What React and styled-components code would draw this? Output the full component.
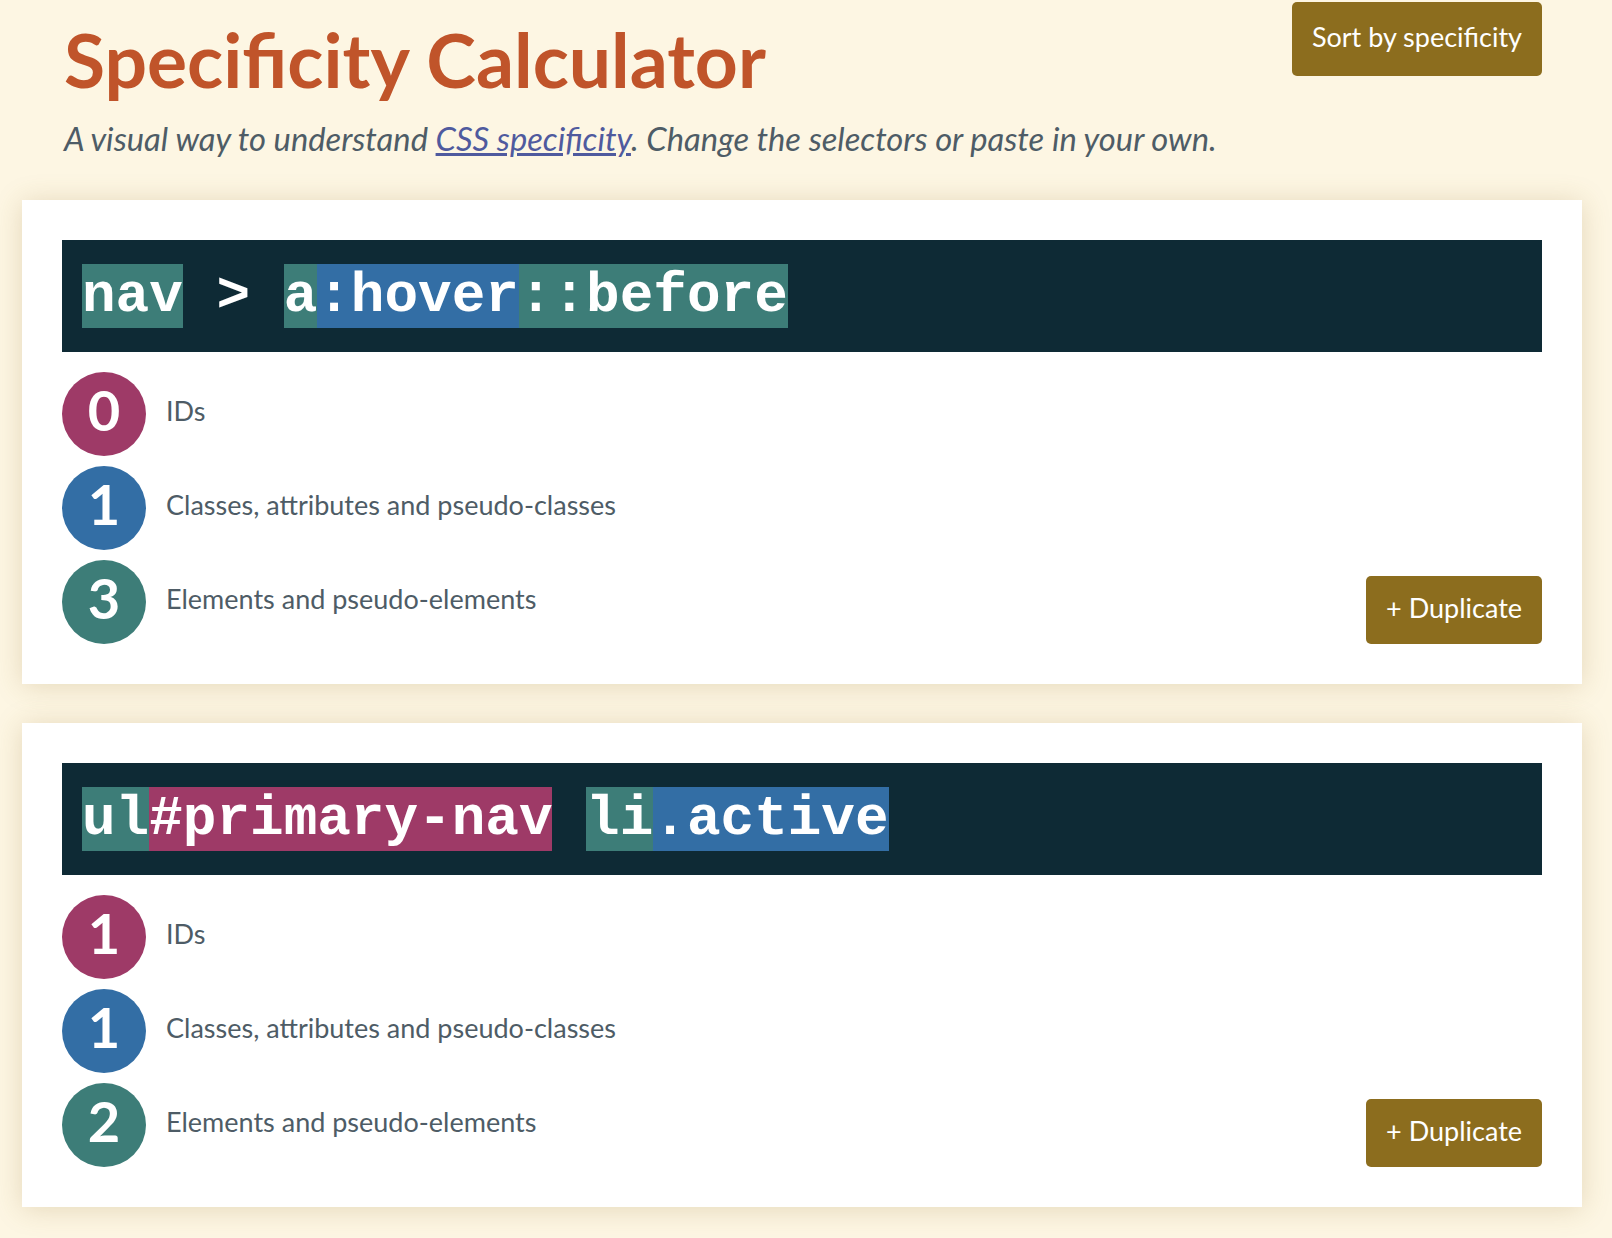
import React from "react";
import styled, { createGlobalStyle } from "styled-components";

const GlobalStyle = createGlobalStyle`
  body {
    margin: 0;
    background: #fdf6e3;
    font-family: Lato, "Noto Sans", sans-serif;
  }
`;

const COLORS = {
  id: "#9e3a67",
  cls: "#336ea5",
  el: "#3d7d78",
};

const selectors = [
  {
    parts: [
      { text: "nav", kind: "el" },
      { text: " > " },
      { text: "a", kind: "el" },
      { text: ":hover", kind: "cls" },
      { text: "::before", kind: "el" },
    ],
    counts: [0, 1, 3],
  },
  {
    parts: [
      { text: "ul", kind: "el" },
      { text: "#primary-nav", kind: "id" },
      { text: " " },
      { text: "li", kind: "el" },
      { text: ".active", kind: "cls" },
    ],
    counts: [1, 1, 2],
  },
];

const labels = [
  { kind: "id", text: "IDs" },
  { kind: "cls", text: "Classes, attributes and pseudo-classes" },
  { kind: "el", text: "Elements and pseudo-elements" },
];

export default function App() {
  return (
    <>
      <GlobalStyle />
      <Header>
        <div>
          <Title>Specificity Calculator</Title>
          <Subtitle>
            A visual way to understand <a href="#">CSS specificity</a>. Change
            the selectors or paste in your own.
          </Subtitle>
        </div>
        <Button type="button" $top>
          Sort by specificity
        </Button>
      </Header>
      <CardList>
        {selectors.map((sel, i) => (
          <Card key={i}>
            <SelectorBar>
              {sel.parts.map((p, j) => (
                <Part key={j} $kind={p.kind}>
                  {p.text}
                </Part>
              ))}
            </SelectorBar>
            <Bottom>
              <Counts>
                {labels.map((l, k) => (
                  <CountRow key={l.kind}>
                    <Circle $kind={l.kind}>{sel.counts[k]}</Circle>
                    <Label>{l.text}</Label>
                  </CountRow>
                ))}
              </Counts>
              <Button type="button">+ Duplicate</Button>
            </Bottom>
          </Card>
        ))}
      </CardList>
    </>
  );
}

const Header = styled.header`
  display: flex;
  justify-content: space-between;
  align-items: flex-start;
  padding: 0 70px 0 64px;
`;

const Title = styled.h1`
  margin: 0;
  padding-top: 16px;
  font-size: 75px;
  line-height: 86px;
  font-weight: 700;
  color: #c0542a;
`;

const Subtitle = styled.p`
  margin: 18px 0 0;
  font-size: 32.7px;
  line-height: 38px;
  font-style: italic;
  color: #4e5c66;

  a {
    color: #4f5a9e;
  }
`;

const Button = styled.button`
  margin-top: ${({ $top }) => ($top ? "2px" : "0")};
  height: ${({ $top }) => ($top ? "74px" : "68px")};
  padding: 0 20px 5px;
  border: none;
  border-radius: 5px;
  background: #8c6d1e;
  color: #fff;
  font-family: Lato, "Noto Sans", sans-serif;
  font-size: 27px;
  cursor: pointer;
`;

const CardList = styled.main`
  display: flex;
  flex-direction: column;
  gap: 39px;
  padding: 0 30px 31px 22px;
  margin-top: 42px;
`;

const Card = styled.section`
  background: #fff;
  padding: 40px;
  box-shadow: 0 2px 26px rgba(140, 110, 40, 0.22);
`;

const SelectorBar = styled.div`
  background: #0e2a35;
  padding: 24px 20px;
  font-family: "Liberation Mono", monospace;
  font-weight: 700;
  font-size: 56px;
  line-height: 64px;
  color: #fff;
  white-space: pre;
`;

const Part = styled.span`
  display: inline-block;
  vertical-align: top;
  height: 64px;
  background: ${({ $kind }) => ($kind ? COLORS[$kind] : "transparent")};
`;

const Bottom = styled.div`
  display: flex;
  justify-content: space-between;
  align-items: flex-end;
  margin-top: 20px;
`;

const Counts = styled.ul`
  list-style: none;
  margin: 0;
  padding: 0;
  display: flex;
  flex-direction: column;
  gap: 10px;
`;

const CountRow = styled.li`
  display: flex;
  align-items: center;
  gap: 20px;
`;

const Circle = styled.span`
  box-sizing: border-box;
  width: 84px;
  height: 84px;
  padding-bottom: 8px;
  border-radius: 50%;
  background: ${({ $kind }) => COLORS[$kind]};
  color: #fff;
  display: flex;
  align-items: center;
  justify-content: center;
  font-size: 56px;
  font-weight: 700;
  line-height: 1;
`;

const Label = styled.span`
  padding-bottom: 7px;
  font-size: 27px;
  color: #4e5c66;
`;
